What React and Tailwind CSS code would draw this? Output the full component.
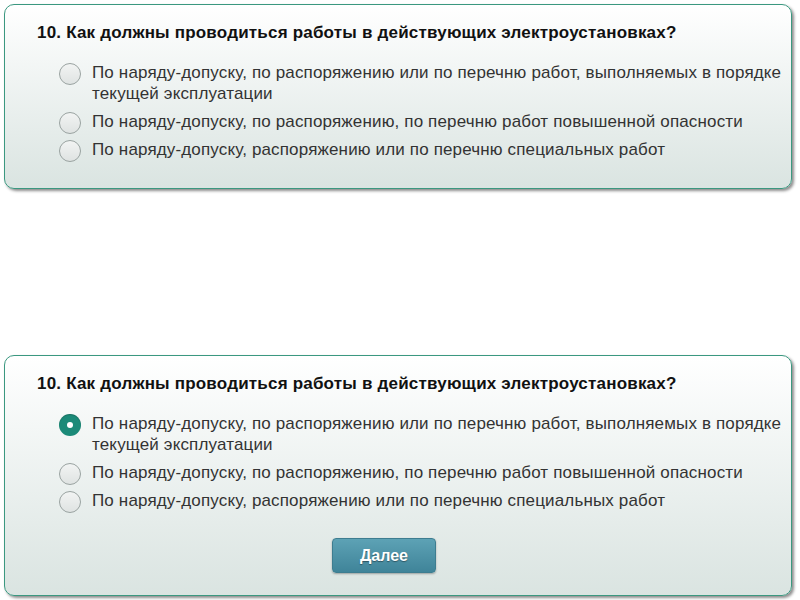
import React from "react";

const options = [
  ["По наряду-допуску, по распоряжению или по перечню работ, выполняемых в порядке", "текущей эксплуатации"],
  ["По наряду-допуску, по распоряжению, по перечню работ повышенной опасности"],
  ["По наряду-допуску, распоряжению или по перечню специальных работ"],
];

function Radio({ checked }) {
  if (checked) {
    return (
      <span className="flex h-[22px] w-[22px] shrink-0 items-center justify-center rounded-full bg-[#1b8a78] shadow-[inset_0_1px_1px_rgba(0,0,0,0.2)]">
        <span className="block h-[6px] w-[6px] rounded-full bg-white" />
      </span>
    );
  }
  return (
    <span className="block h-[22px] w-[22px] shrink-0 rounded-full border border-[#9aa3a1] bg-gradient-to-b from-[#f2f4f3] to-[#dfe3e2]" />
  );
}

function Card({ selected, withButton, className }) {
  return (
    <div
      className={
        "mx-[4px] w-[788px] rounded-[10px] border-[1.5px] border-[#3b9880] bg-gradient-to-b from-[#ffffff] to-[#dae4e1] shadow-[2px_2px_3px_rgba(0,0,0,0.45)] " +
        className
      }
    >
      <div className="pl-[32px] pr-[6px] pt-[18px] text-[17px] font-bold leading-[20px] tracking-[0.2px] text-[#111]">
        10. Как должны проводиться работы в действующих электроустановках?
      </div>
      <div className="mt-[19px] flex flex-col gap-[7px] pl-[54px]">
        {options.map((o, i) => (
          <div key={i} className="flex items-start gap-[11px]">
            <div className="h-[21px] pt-[1px]">
              <Radio checked={selected === i} />
            </div>
            <div className="whitespace-nowrap text-[17px] leading-[21px] tracking-[0.15px] text-[#333]">
              {o.map((line, j) => (
                <div key={j}>{line}</div>
              ))}
            </div>
          </div>
        ))}
      </div>
      {withButton ? (
        <div className="mt-[27px] pb-[22px] pl-[327px]">
          <button className="h-[35px] w-[104px] rounded-[4px] border border-[#3d7d90] bg-gradient-to-b from-[#5da2b5] to-[#3f8499] text-[16px] font-bold text-white [text-shadow:0_1px_1px_rgba(0,0,0,0.4)] shadow-[0_1px_2px_rgba(0,0,0,0.3)]">
            Далее
          </button>
        </div>
      ) : (
        <div className="h-[28px]" />
      )}
    </div>
  );
}

export default function App() {
  return (
    <div
      className="h-[600px] w-[800px] bg-white pt-[4px]"
      style={{ fontFamily: '"Liberation Sans", Arial, sans-serif' }}
    >
      <Card selected={-1} withButton={false} className="" />
      <Card selected={0} withButton={true} className="mt-[166px]" />
    </div>
  );
}
